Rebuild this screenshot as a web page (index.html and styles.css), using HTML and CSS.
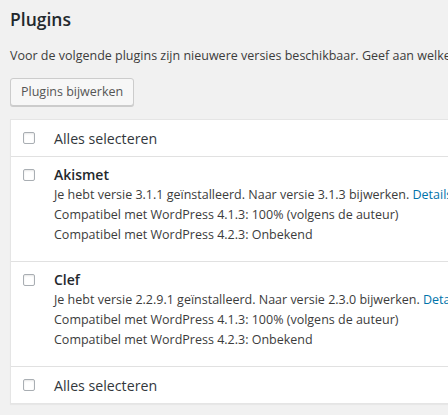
FILE: index.html
```html
<!DOCTYPE html>
<html lang="nl">
<head>
<meta charset="utf-8">
<title>Plugins</title>
<link rel="stylesheet" href="styles.css">
</head>
<body>
<div class="wrap">
  <h3 class="title">Plugins</h3>
  <p class="intro">Voor de volgende plugins zijn nieuwere versies beschikbaar. Geef aan welke plugins je wilt bijwerken en klik op de knop &ldquo;Plugins bijwerken&rdquo;.</p>
  <button class="button" type="button">Plugins bijwerken</button>
  <div class="table">
    <div class="row head">
      <input class="check" type="checkbox">
      <span class="label">Alles selecteren</span>
    </div>
    <div class="row plugin">
      <input class="check" type="checkbox">
      <div class="info">
        <div class="name">Akismet</div>
        <div class="line">Je hebt versie 3.1.1 geïnstalleerd. Naar versie 3.1.3 bijwerken. <a href="#">Details van versie 3.1.3 bekijken.</a></div>
        <div class="line">Compatibel met WordPress 4.1.3: 100% (volgens de auteur)</div>
        <div class="line">Compatibel met WordPress 4.2.3: Onbekend</div>
      </div>
    </div>
    <div class="row plugin">
      <input class="check" type="checkbox">
      <div class="info">
        <div class="name">Clef</div>
        <div class="line">Je hebt versie 2.2.9.1 geïnstalleerd. Naar versie 2.3.0 bijwerken. <a href="#">Details van versie 2.3.0 bekijken.</a></div>
        <div class="line">Compatibel met WordPress 4.1.3: 100% (volgens de auteur)</div>
        <div class="line">Compatibel met WordPress 4.2.3: Onbekend</div>
      </div>
    </div>
    <div class="row foot">
      <input class="check" type="checkbox">
      <span class="label">Alles selecteren</span>
    </div>
  </div>
</div>
</body>
</html>
```

FILE: styles.css
```css
html, body {
  margin: 0;
  padding: 0;
  overflow: hidden;
}
body {
  background: #f1f1f1;
  color: #3c3c3c;
  font-family: "Open Sans", "Noto Sans", sans-serif;
  font-size: 12.5px;
  line-height: 20px;
  width: 448px;
  height: 415px;
}
.wrap {
  padding-left: 10px;
  width: 800px;
}
.title {
  margin: 7px 0 0;
  font-size: 17.5px;
  line-height: 24px;
  font-weight: 600;
  color: #23282d;
}
.intro {
  margin: 15px 0 0;
  white-space: nowrap;
}
.button {
  display: block;
  margin: 12px 0 0;
  height: 28px;
  padding: 0 10px;
  font-family: inherit;
  font-size: 12.5px;
  line-height: 26px;
  color: #555;
  background: #f7f7f7;
  border: 1px solid #ccc;
  border-radius: 3px;
  box-shadow: 0 1px 0 #ccc;
  cursor: pointer;
}
.table {
  margin-top: 13px;
  background: #fff;
  border: 1px solid #e5e5e5;
  box-shadow: 0 1px 1px rgba(0,0,0,.04);
}
.row {
  display: flex;
  align-items: flex-start;
  border-bottom: 1px solid #e1e1e1;
  padding-left: 12px;
  white-space: nowrap;
}
.row.foot {
  border-bottom: 0;
}
.row.head, .row.foot {
  height: 36px;
  align-items: center;
}
.label {
  font-size: 14.2px;
  line-height: 20px;
  margin-left: 19px;
  color: #32373c;
  padding-top: 1px;
}
.plugin {
  height: 104px;
}
.check {
  appearance: none;
  -webkit-appearance: none;
  margin: 0;
  width: 12px;
  height: 12px;
  flex: none;
  border: 1px solid #a9aeb3;
  border-radius: 2px;
  background: #fff;
  box-shadow: inset 0 1px 2px rgba(0,0,0,.1);
}
.plugin .check {
  margin-top: 12px;
}
.info {
  margin-left: 19px;
  padding-top: 8px;
}
.name {
  font-size: 14px;
  font-weight: 600;
  line-height: 20px;
  color: #23282d;
}
.line {
  line-height: 20px;
}
a {
  color: #0073aa;
  text-decoration: none;
}
```
